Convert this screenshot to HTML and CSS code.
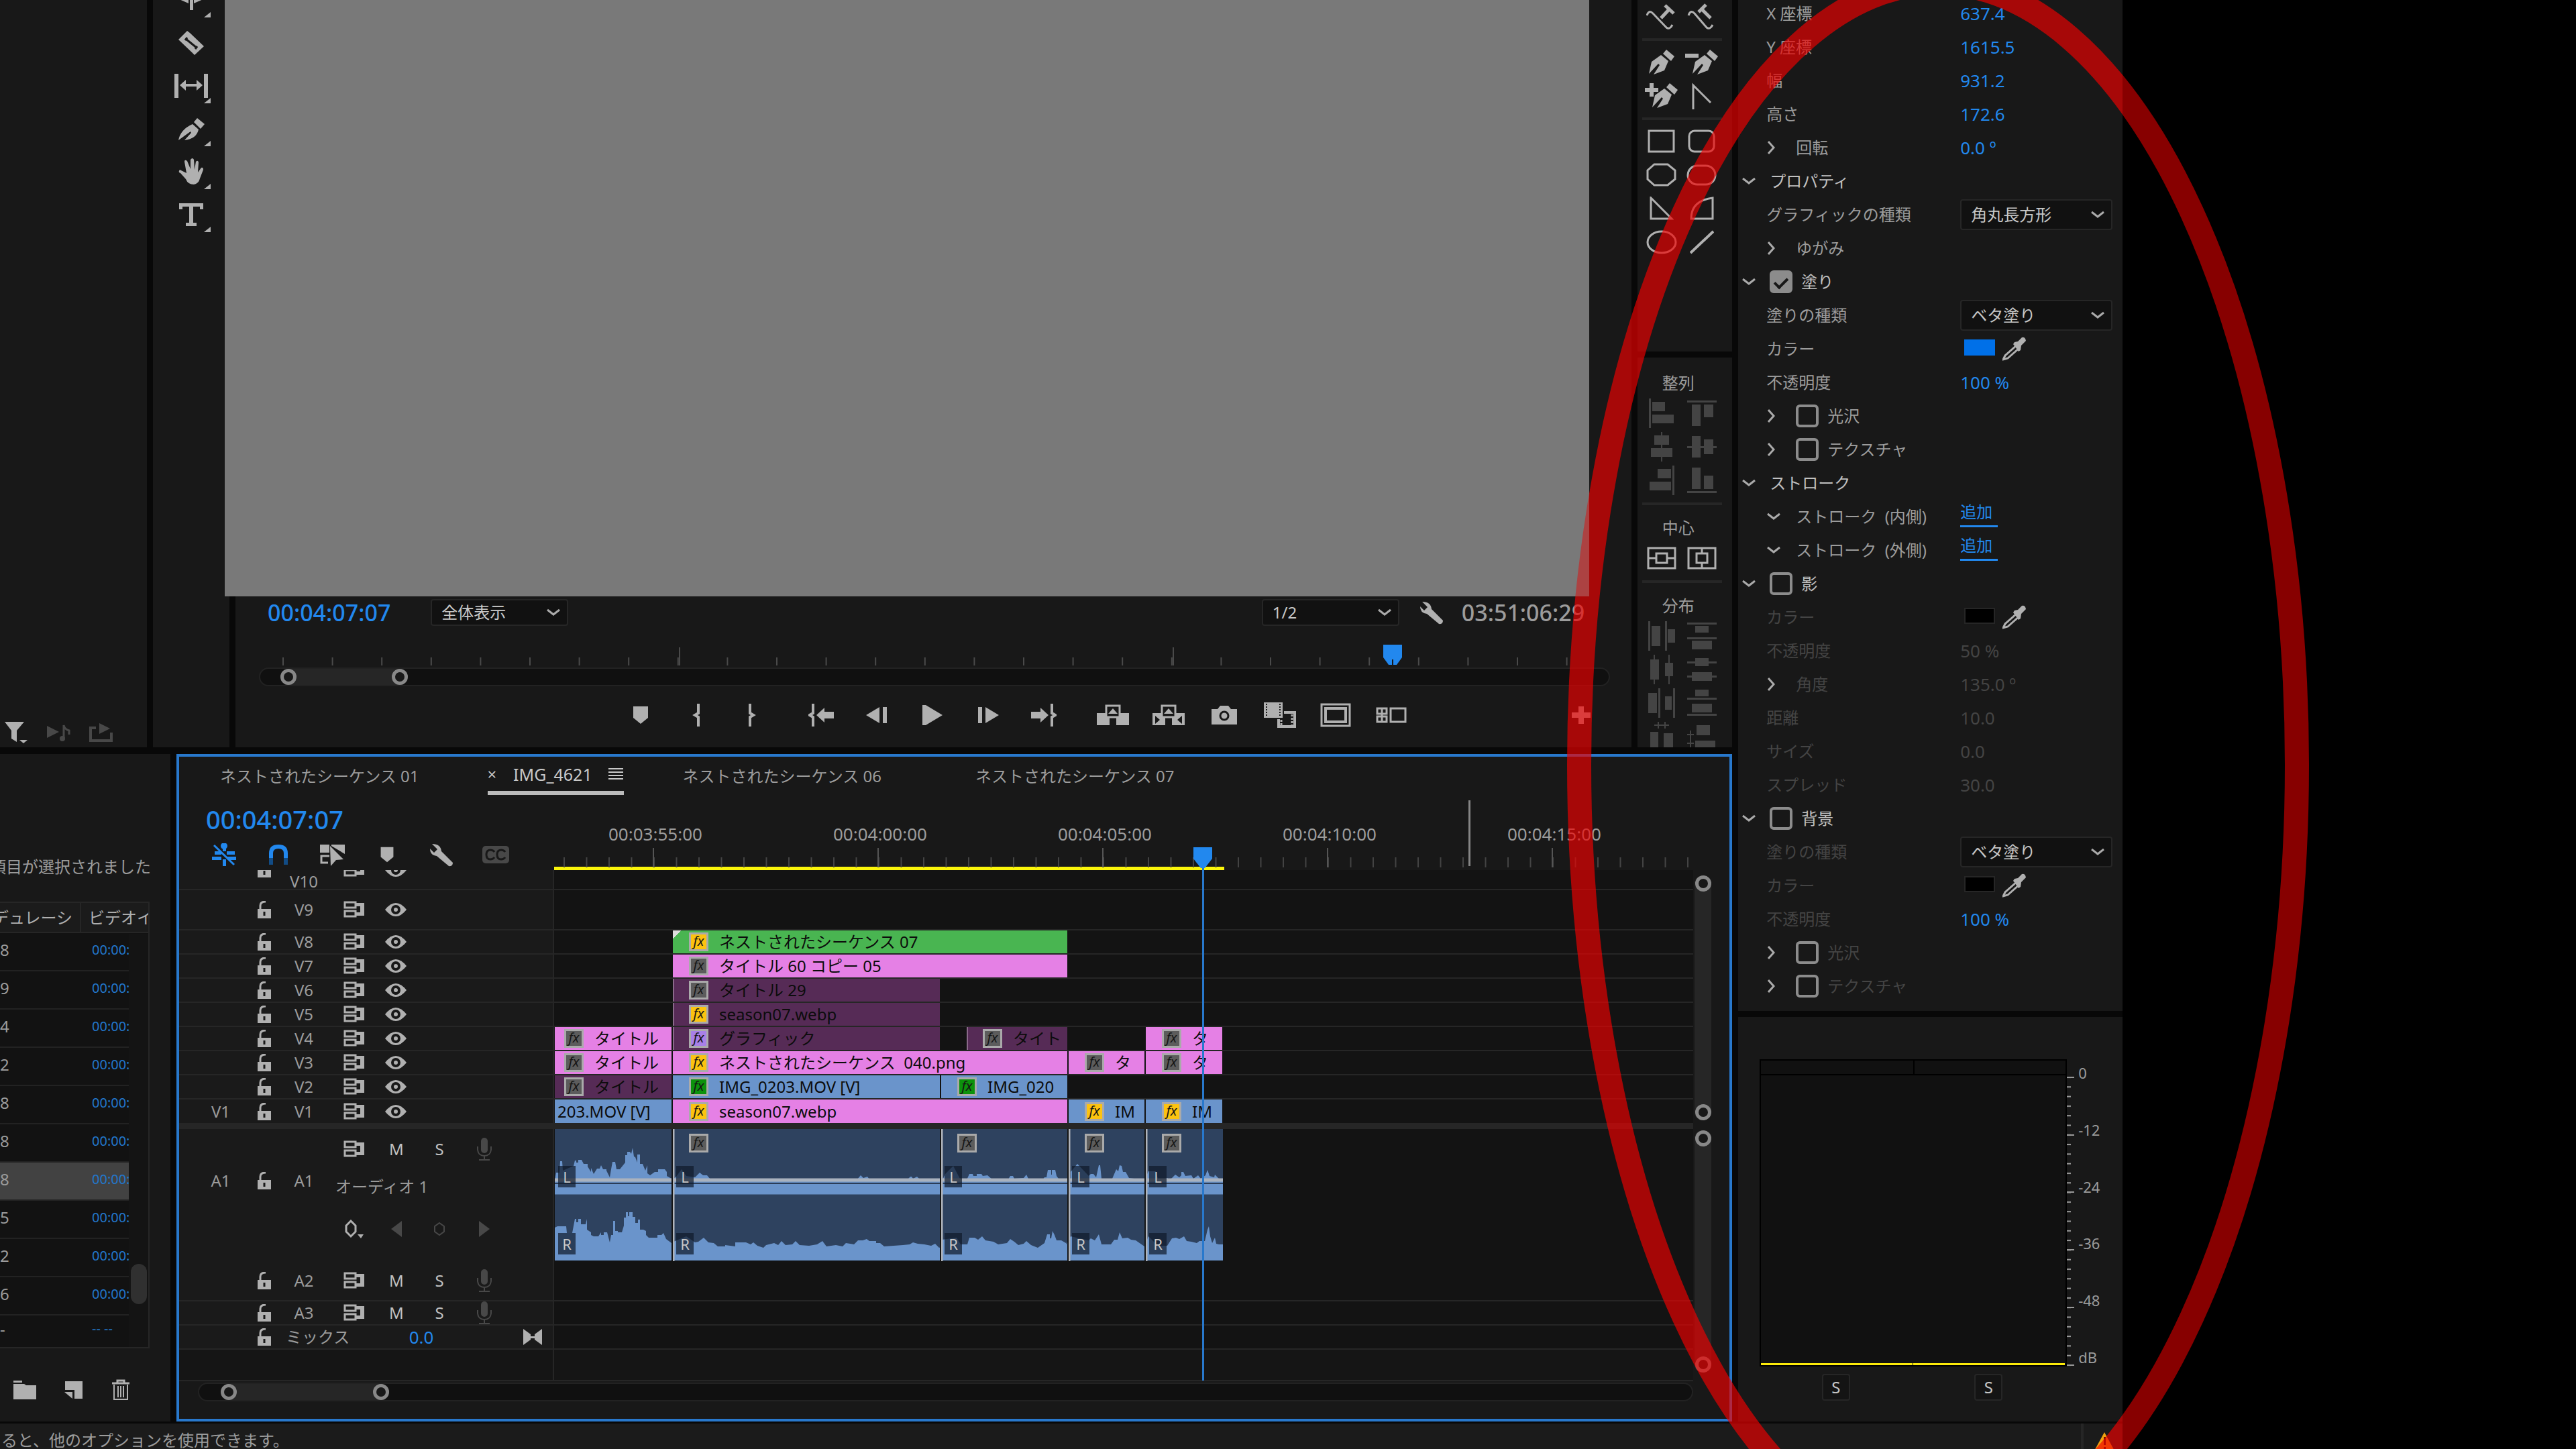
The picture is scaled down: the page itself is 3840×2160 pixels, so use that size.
FILE: index.html
```html
<!DOCTYPE html>
<html lang="ja">
<head>
    <meta charset="UTF-8">
    <meta name="viewport" content="width=device-width, initial-scale=1.0">
    <title>IMG_4621</title>
    <link rel="stylesheet" href="styles.css">
</head>
<body>
    <svg class="sprite" aria-hidden="true">
        <symbol id="i-down" viewBox="0 0 20 12"><path d="M1 2l9 7 9-7" fill="none" stroke="currentColor" stroke-width="3"/></symbol>
        <symbol id="i-right" viewBox="0 0 12 20"><path d="M2 1l8 9-8 9" fill="none" stroke="currentColor" stroke-width="3"/></symbol>
        <symbol id="i-corner" viewBox="0 0 10 8"><path d="M10 0v8H0z" fill="currentColor"/></symbol>
        <symbol id="i-lock" viewBox="0 0 22 26"><path d="M1 12h20v14H1z" fill="currentColor"/><path d="M5 13V7q0-6 8-6" fill="none" stroke="currentColor" stroke-width="3"/><path d="M11 16v6" stroke="#181818" stroke-width="3"/></symbol>
        <symbol id="i-sync" viewBox="0 0 32 26"><path d="M2 2h16v8H2zM2 15h16v8H2z" fill="none" stroke="currentColor" stroke-width="3"/><path d="M18 3h13v19H18v-5h7V8h-7z" fill="currentColor"/></symbol>
        <symbol id="i-eye" viewBox="0 0 32 22"><path d="M0 11Q8 1 16 1t16 10q-8 10-16 10T0 11z" fill="currentColor"/><circle cx="16" cy="11" r="7" fill="#181818"/><circle cx="16" cy="11" r="3" fill="currentColor"/></symbol>
        <symbol id="i-mic" viewBox="0 0 24 34"><rect x="7" y="0" width="10" height="23" rx="5" fill="currentColor"/><path d="M2 13v5q1 9 10 9t10-9v-5M12 27v6M4 33h16" fill="none" stroke="currentColor" stroke-width="2"/></symbol>
        <symbol id="i-pipette" viewBox="0 0 36 36"><path d="M22 12L4 28l-3 6 7-2 18-16" fill="none" stroke="currentColor" stroke-width="3"/><path d="M18 8l5-1 6-6q5-1 6 5l-7 7-1 7-3 2L16 11z" fill="currentColor"/></symbol>
        <symbol id="i-marker" viewBox="0 0 24 28"><path d="M1 1h22v17L12 27 1 18z" fill="currentColor"/></symbol>
        <symbol id="i-wrench" viewBox="0 0 36 36"><path d="M4 2L12 10l-5 5-6-6q0 10 10 11l18 15q6 1 6-5L18 13Q17 2 4 2z" fill="currentColor"/></symbol>
        <symbol id="i-pen" viewBox="0 0 40 38"><path d="M1 36Q4 20 22 12l9 8Q28 34 10 36L20 25l-1-2z" fill="currentColor"/><path d="M24 9l5-6 11 9-6 7z" fill="currentColor"/></symbol>
        <symbol id="i-nib" viewBox="0 0 40 38"><path d="M1 36L5 18 19 8l11 9-6 14-16 6 9-14-2-2z" fill="currentColor"/><path d="M22 6l5-6 12 10-5 7z" fill="currentColor"/></symbol>
    </svg>

    <div class="app">
        <div class="workspace">
            <div class="upper">
                <section class="panel effects">
                    <div class="effects-bar">
                        <button aria-label="フィルター"><svg width="36" height="32" viewBox="0 0 36 32"><path d="M0 0h29L18 13v17l-8-5V13z" fill="currentColor"/><path d="M22 27h12l-6 5z" fill="currentColor"/></svg></button>
                        <button class="dim" aria-label="オーディオ再生"><svg width="36" height="26" viewBox="0 0 36 26"><path d="M0 3l18 9-18 9z" fill="currentColor"/><path d="M25 21V2q1 6 8 8v6" fill="none" stroke="currentColor" stroke-width="3"/><circle cx="23" cy="22" r="4" fill="currentColor"/></svg></button>
                        <button class="dim" aria-label="書き出し"><svg width="36" height="28" viewBox="0 0 36 28"><path d="M10 7H2v19h31V14" fill="none" stroke="currentColor" stroke-width="4"/><path d="M15 0l16 8-16 8z" fill="currentColor"/></svg></button>
                    </div>
                </section>

                <section class="panel tools">
                    <button aria-label="トラック選択ツール"><svg width="40" height="30" viewBox="0 0 40 30"><path d="M18 0h5v30h-5zM0 13l16 7v-7zM40 13l-16 7v-7z" fill="currentColor"/></svg><svg class="corner"><use href="#i-corner"/></svg></button>
                    <button aria-label="レーザーツール"><svg width="40" height="38" viewBox="0 0 40 38"><path d="M1 14L14 1l4 3 21 20-14 13-4-4z" fill="currentColor"/><path d="M12 13l16 13M14 11l-3 4M29 24l-3 4" stroke="#181818" stroke-width="3"/></svg></button>
                    <button aria-label="スリップツール"><svg width="50" height="36" viewBox="0 0 50 36"><path d="M0 0h6v36H0zM44 0h6v36h-6zM8 17l9-8v6h16V9l9 8-9 8v-6H17v6z" fill="currentColor"/></svg><svg class="corner"><use href="#i-corner"/></svg></button>
                    <button aria-label="ペンツール"><svg width="40" height="38"><use href="#i-pen"/></svg><svg class="corner"><use href="#i-corner"/></svg></button>
                    <button aria-label="手のひらツール"><svg width="38" height="40" viewBox="0 0 38 40"><path d="M2 17Q-1 21 3 22l8 9q3 8 12 8 7-1 9-9l5-13q0-4-3-3l-5 7 1-15q-1-4-4-1l-2 12-1-15q-2-4-5 0v14L13 4q-4-3-4 1l3 17z" fill="currentColor"/></svg><svg class="corner"><use href="#i-corner"/></svg></button>
                    <button aria-label="横書き文字ツール"><svg width="36" height="34" viewBox="0 0 36 34"><path d="M0 0h36v9h-5V5H21v24h5v5H10v-5h5V5H5v4H0z" fill="currentColor"/></svg><svg class="corner"><use href="#i-corner"/></svg></button>
                </section>

                <section class="panel monitor">
                    <div class="video"></div>
                    <div class="monitor-info">
                        <button class="timecode">00:04:07:07</button>
                        <div class="select zoom-select">
                            <select aria-label="ズームレベル"><option>全体表示</option></select>
                            <svg><use href="#i-down"/></svg>
                        </div>
                        <div class="select quality-select">
                            <select aria-label="再生時の解像度"><option>1/2</option></select>
                            <svg><use href="#i-down"/></svg>
                        </div>
                        <button class="wrench" aria-label="設定"><svg width="36" height="36"><use href="#i-wrench"/></svg></button>
                        <span class="duration">03:51:06:29</span>
                    </div>
                    <div class="monitor-ruler">
                        <svg width="100%" height="34">
                            <defs>
                                <pattern id="mon-ticks" x="33" width="73.6" height="34" patternUnits="userSpaceOnUse"><path d="M1 21v12" stroke="#4a4a4a" stroke-width="2"/></pattern>
                                <pattern id="mon-major" x="624" width="736" height="34" patternUnits="userSpaceOnUse"><path d="M1 6v27" stroke="#4a4a4a" stroke-width="2"/></pattern>
                            </defs>
                            <rect x="33" width="1930" height="34" fill="url(#mon-ticks)"/>
                            <rect x="33" width="1930" height="34" fill="url(#mon-major)"/>
                            <path d="M1674 2h28v19l-8 11h-5v-8h-2v8h-5l-8-11z" fill="#2288ee"/>
                        </svg>
                    </div>
                    <div class="hscroll monitor-scroll"><div class="thumb"><i></i><i></i></div></div>
                    <div class="transport">
                        <button aria-label="マーカーを追加"><svg width="24" height="28"><use href="#i-marker"/></svg></button>
                        <button aria-label="インをマーク"><svg width="12" height="34" viewBox="0 0 12 34"><path d="M11 1H9v13l-5 3 5 3v13h2" fill="none" stroke="currentColor" stroke-width="4"/></svg></button>
                        <button aria-label="アウトをマーク"><svg width="12" height="34" viewBox="0 0 12 34"><path d="M1 1h2v13l5 3-5 3v13H1" fill="none" stroke="currentColor" stroke-width="4"/></svg></button>
                        <button class="spaced" aria-label="インへ移動"><svg width="38" height="34" viewBox="0 0 38 34"><path d="M9 1H7v13l-5 3 5 3v13h2" fill="none" stroke="currentColor" stroke-width="4"/><path d="M12 17L24 6v6h14v10H24v6z" fill="currentColor"/></svg></button>
                        <button aria-label="1 フレーム前へ"><svg width="32" height="24" viewBox="0 0 32 24"><path d="M0 12L20 0v24zM25 0h6v24h-6z" fill="currentColor"/></svg></button>
                        <button aria-label="再生"><svg width="30" height="30" viewBox="0 0 30 30"><path d="M0 0h5l25 15L5 30H0z" fill="currentColor"/></svg></button>
                        <button aria-label="1 フレーム先へ"><svg width="32" height="24" viewBox="0 0 32 24"><path d="M32 12L12 0v24zM1 0h6v24H1z" fill="currentColor"/></svg></button>
                        <button aria-label="アウトへ移動"><svg width="38" height="34" viewBox="0 0 38 34"><path d="M29 1h2v13l5 3-5 3v13h-2" fill="none" stroke="currentColor" stroke-width="4"/><path d="M26 17L14 6v6H0v10h14v6z" fill="currentColor"/></svg></button>
                        <button class="spaced" aria-label="リフト"><svg width="48" height="32" viewBox="0 0 48 32"><path d="M0 13h13v6h6v12H0zM48 13H35v6h-6v12h19z" fill="currentColor"/><path d="M14 19V2h20v17z" fill="none" stroke="currentColor" stroke-width="3"/><path d="M24 6l7 8H17z" fill="currentColor"/></svg></button>
                        <button aria-label="抽出"><svg width="48" height="32" viewBox="0 0 48 32"><path d="M0 13h13v6h6v12H0zM48 13H35v6h-6v12h19z" fill="currentColor"/><path d="M14 19V2h20v17z" fill="none" stroke="currentColor" stroke-width="3"/><path d="M24 6l7 8H17z" fill="currentColor"/><path d="M4 17l7 6-7 6zM44 17l-7 6 7 6z" fill="#181818"/></svg></button>
                        <button aria-label="フレームを書き出し"><svg width="38" height="28" viewBox="0 0 38 28"><path d="M0 5h9l4-5h12l4 5h9v23H0z" fill="currentColor"/><circle cx="19" cy="15" r="6" fill="none" stroke="#181818" stroke-width="3"/></svg></button>
                        <button aria-label="比較表示"><svg width="48" height="38" viewBox="0 0 48 38"><path d="M0 0h28v23H0z" fill="currentColor"/><path d="M4 2v20M24 2v20" stroke="#181818" stroke-width="2" stroke-dasharray="2 2"/><path d="M30 15h16v21H22V25" fill="none" stroke="currentColor" stroke-width="4"/><path d="M26 26v9M42 18v18" stroke="currentColor" stroke-width="3" stroke-dasharray="3 2"/></svg></button>
                        <button aria-label="セーフマージン"><svg width="46" height="36" viewBox="0 0 46 36"><path d="M2 2h42v32H2z" fill="none" stroke="currentColor" stroke-width="3"/><path d="M8 8h30v20H8z" fill="none" stroke="currentColor" stroke-width="4"/></svg></button>
                        <button aria-label="マルチカメラ表示"><svg width="46" height="24" viewBox="0 0 46 24"><path d="M2 2h14v8H2zM2 14h14v8H2zM22 2h22v20H22z" fill="none" stroke="currentColor" stroke-width="3"/><path d="M9 2v20" stroke="currentColor" stroke-width="3"/></svg></button>
                        <button class="plus" aria-label="ボタンエディター"><svg width="28" height="26" viewBox="0 0 28 26"><path d="M10 0h8v9h10v8H18v9h-8v-9H0V9h10z" fill="currentColor"/></svg></button>
                    </div>
                </section>

                <div class="title-side">
                    <section class="panel title-tools">
                        <div class="pair">
                            <button aria-label="パス上文字"><svg width="46" height="40" viewBox="0 0 46 40"><path d="M1 18q3-9 9-3l20 21q5 4 9-4" fill="none" stroke="currentColor" stroke-width="3"/><path d="M22 22L36 7M28 3l13 12" stroke="currentColor" stroke-width="5"/></svg></button>
                            <button aria-label="縦書きパス上文字"><svg width="46" height="40" viewBox="0 0 46 40"><path d="M3 18q3-9 9-3l18 21q5 4 9-4" fill="none" stroke="currentColor" stroke-width="3"/><path d="M36 22L22 8M18 13L29 2" stroke="currentColor" stroke-width="5"/></svg></button>
                        </div>
                        <hr>
                        <div class="pair">
                            <button aria-label="ペン"><svg width="40" height="38"><use href="#i-nib"/></svg></button>
                            <button aria-label="アンカーポイントの削除"><svg width="50" height="38" viewBox="0 0 50 38"><path d="M0 6h20v6H0z" fill="currentColor"/><use href="#i-nib" x="10" width="40" height="38"/></svg></button>
                        </div>
                        <div class="pair">
                            <button aria-label="アンカーポイントの追加"><svg width="50" height="38" viewBox="0 0 50 38"><path d="M7 0h6v7h7v6h-7v7H7v-7H0V7h7z" fill="currentColor"/><use href="#i-nib" x="10" width="40" height="38"/></svg></button>
                            <button aria-label="アンカーポイントの切り替え"><svg width="30" height="40" viewBox="0 0 30 40"><path d="M2 40V4l26 26" fill="none" stroke="currentColor" stroke-width="3"/></svg></button>
                        </div>
                        <hr>
                        <div class="pair">
                            <button aria-label="長方形"><svg width="42" height="36" viewBox="0 0 42 36"><rect x="2" y="2" width="37" height="31" fill="none" stroke="currentColor" stroke-width="3"/></svg></button>
                            <button aria-label="角丸長方形"><svg width="42" height="36" viewBox="0 0 42 36"><rect x="2" y="2" width="37" height="31" rx="8" fill="none" stroke="currentColor" stroke-width="3"/></svg></button>
                        </div>
                        <div class="pair">
                            <button aria-label="面取り長方形"><svg width="46" height="36" viewBox="0 0 46 36"><path d="M12 2h20l11 9v13l-11 9H12L2 24V11z" fill="none" stroke="currentColor" stroke-width="3"/></svg></button>
                            <button aria-label="角丸四角形"><svg width="46" height="36" viewBox="0 0 46 36"><rect x="2" y="4" width="41" height="28" rx="14" fill="none" stroke="currentColor" stroke-width="3"/></svg></button>
                        </div>
                        <div class="pair">
                            <button aria-label="くさび形"><svg width="36" height="36" viewBox="0 0 36 36"><path d="M2 2v31h31z" fill="none" stroke="currentColor" stroke-width="3"/></svg></button>
                            <button aria-label="円弧"><svg width="36" height="36" viewBox="0 0 36 36"><path d="M34 2v31H2Q2 6 34 2z" fill="none" stroke="currentColor" stroke-width="3"/></svg></button>
                        </div>
                        <div class="pair">
                            <button aria-label="楕円"><svg width="46" height="36" viewBox="0 0 46 36"><ellipse cx="23" cy="18" rx="21" ry="16" fill="none" stroke="currentColor" stroke-width="3"/></svg></button>
                            <button aria-label="ライン"><svg width="36" height="36" viewBox="0 0 36 36"><path d="M1 34L35 2" stroke="currentColor" stroke-width="4"/></svg></button>
                        </div>
                    </section>

                    <section class="panel align">
                        <h3>整列</h3>
                        <div class="pair dim">
                            <button disabled aria-label="左揃え"><svg width="38" height="44" viewBox="0 0 38 44"><path d="M0 0h3v44H0zM5 5h19v14H5zM5 24h32v13H5z" fill="currentColor"/></svg></button>
                            <button disabled aria-label="上揃え"><svg width="44" height="38" viewBox="0 0 44 38"><path d="M0 0h44v3H0zM7 6h13v32H7zM25 6h14v19H25z" fill="currentColor"/></svg></button>
                        </div>
                        <div class="pair dim">
                            <button disabled aria-label="水平方向中央揃え"><svg width="34" height="44" viewBox="0 0 34 44"><path d="M16 0h2v44h-2zM6 5h22v14H6zM1 24h32v13H1z" fill="currentColor"/></svg></button>
                            <button disabled aria-label="垂直方向中央揃え"><svg width="44" height="34" viewBox="0 0 44 34"><path d="M0 16h44v3H0zM7 1h13v32H7zM25 6h14v22H25z" fill="currentColor"/></svg></button>
                        </div>
                        <div class="pair dim">
                            <button disabled aria-label="右揃え"><svg width="38" height="44" viewBox="0 0 38 44"><path d="M35 0h3v44h-3zM13 5h20v14H13zM1 24h32v13H1z" fill="currentColor"/></svg></button>
                            <button disabled aria-label="下揃え"><svg width="44" height="38" viewBox="0 0 44 38"><path d="M0 35h44v3H0zM7 0h13v32H7zM25 12h14v20H25z" fill="currentColor"/></svg></button>
                        </div>
                        <hr>
                        <h3>中心</h3>
                        <div class="pair">
                            <button aria-label="垂直方向中央"><svg width="44" height="34" viewBox="0 0 44 34"><path d="M2 2h40v30H2zM14 10h16v14H14zM2 17h12M30 17h12" fill="none" stroke="currentColor" stroke-width="3"/></svg></button>
                            <button aria-label="水平方向中央"><svg width="44" height="34" viewBox="0 0 44 34"><path d="M2 2h40v30H2zM14 10h16v14H14zM22 2v8M22 24v8" fill="none" stroke="currentColor" stroke-width="3"/></svg></button>
                        </div>
                        <hr>
                        <h3>分布</h3>
                        <div class="pair dim">
                            <button disabled aria-label="左端分布"><svg width="40" height="44" viewBox="0 0 40 44"><path d="M0 0h3v44H0zM5 7h13v30H5zM25 0h3v44h-3zM29 12h11v20H29z" fill="currentColor"/></svg></button>
                            <button disabled aria-label="上端分布"><svg width="44" height="40" viewBox="0 0 44 40"><path d="M0 0h44v3H0zM12 5h20v10H12zM0 22h44v3H0zM7 27h30v13H7z" fill="currentColor"/></svg></button>
                        </div>
                        <div class="pair dim">
                            <button disabled aria-label="水平方向中央分布"><svg width="38" height="44" viewBox="0 0 38 44"><path d="M7 0h2v44H7zM2 7h13v30H2zM29 0h2v44h-2zM24 12h12v20H24z" fill="currentColor"/></svg></button>
                            <button disabled aria-label="垂直方向中央分布"><svg width="44" height="38" viewBox="0 0 44 38"><path d="M0 7h44v3H0zM12 2h20v12H12zM0 28h44v3H0zM7 23h30v13H7z" fill="currentColor"/></svg></button>
                        </div>
                        <div class="pair dim">
                            <button disabled aria-label="右端分布"><svg width="40" height="44" viewBox="0 0 40 44"><path d="M15 0h3v44h-3zM0 7h13v30H0zM37 0h3v44h-3zM25 12h10v20H25z" fill="currentColor"/></svg></button>
                            <button disabled aria-label="下端分布"><svg width="44" height="40" viewBox="0 0 44 40"><path d="M0 12h44v3H0zM12 0h20v10H12zM0 36h44v3H0zM7 21h30v13H7z" fill="currentColor"/></svg></button>
                        </div>
                        <div class="pair dim">
                            <button disabled aria-label="水平方向等間隔"><svg width="36" height="44" viewBox="0 0 36 44"><path d="M1 15h12v29H1zM21 17h14v27H21zM7 4h22v2H7zM12 0h2v10h-2zM22 0h2v10h-2z" fill="currentColor"/></svg></button>
                            <button disabled aria-label="垂直方向等間隔"><svg width="44" height="44" viewBox="0 0 44 44"><path d="M14 5h20v15H14zM12 28h30v14H12zM4 13h2v27H4zM0 18h10v2H0zM0 31h10v2H0z" fill="currentColor"/></svg></button>
                        </div>
                    </section>
                </div>
            </div>

            <div class="lower">
                <section class="panel project">
                    <div class="project-status"><span>項目が選択されました</span></div>
                    <div class="bin">
                        <table>
                            <thead><tr><th>デュレーシ</th><th>ビデオイ</th></tr></thead>
                            <tbody>
                                <tr><td>8</td><td>00:00:</td></tr>
                                <tr><td>9</td><td>00:00:</td></tr>
                                <tr><td>4</td><td>00:00:</td></tr>
                                <tr><td>2</td><td>00:00:</td></tr>
                                <tr><td>8</td><td>00:00:</td></tr>
                                <tr><td>8</td><td>00:00:</td></tr>
                                <tr class="selected"><td>8</td><td>00:00:</td></tr>
                                <tr><td>5</td><td>00:00:</td></tr>
                                <tr><td>2</td><td>00:00:</td></tr>
                                <tr><td>6</td><td>00:00:</td></tr>
                                <tr class="last"><td>-</td><td>-- --</td></tr>
                            </tbody>
                        </table>
                        <div class="bin-scroll"></div>
                    </div>
                    <div class="project-bar">
                        <button aria-label="新規ビン"><svg width="34" height="28" viewBox="0 0 34 28"><path d="M0 0h13v3H0zM0 5h16l3 2h15v21H0z" fill="currentColor"/></svg></button>
                        <button aria-label="新規項目"><svg width="28" height="28" viewBox="0 0 28 28"><path d="M1 1h26v26H15V14H1z" fill="currentColor"/><path d="M0 17h12v10z" fill="currentColor"/></svg></button>
                        <button aria-label="消去"><svg width="28" height="32" viewBox="0 0 28 32"><path d="M1 6h26M9 5V2h10v3" fill="none" stroke="currentColor" stroke-width="3"/><path d="M4 8v22h20V8M10 10v17M14 10v17M18 10v17" fill="none" stroke="currentColor" stroke-width="2"/></svg></button>
                    </div>
                </section>

                <section class="timeline">
                    <div class="tabs">
                        <button class="tab">ネストされたシーケンス 01</button>
                        <div class="tab active"><button aria-label="閉じる">×</button><button class="tab-name">IMG_4621</button><button aria-label="パネルメニュー"><svg width="22" height="20" viewBox="0 0 22 20"><path d="M0 2h22M0 7h22M0 12h22M0 17h22" stroke="currentColor" stroke-width="2"/></svg></button></div>
                        <button class="tab">ネストされたシーケンス 06</button>
                        <button class="tab">ネストされたシーケンス 07</button>
                    </div>
                    <div class="tl-top">
                        <div class="tl-controls">
                            <button class="timecode">00:04:07:07</button>
                            <div class="tl-icons">
                                <button class="on" aria-label="ネストとして挿入"><svg width="36" height="34" viewBox="0 0 36 34"><path d="M16 0h5v12h-5zM22 12h12v5H22zM0 20h14v5H0zM4 12h10v5H4zM16 24h5v10h-5zM23 20h13v5H23z" fill="currentColor"/><path d="M3 3l30 29" stroke="currentColor" stroke-width="3"/><circle cx="18" cy="4" r="5" fill="currentColor"/></svg></button>
                                <button class="on" aria-label="スナップ"><svg width="30" height="30" viewBox="0 0 30 30"><path d="M4 20v-7q0-10 11-10t11 10v7" fill="none" stroke="currentColor" stroke-width="6"/><path d="M4 20v10M26 20v10" stroke="#124c85" stroke-width="6"/></svg></button>
                                <button aria-label="リンクされた選択"><svg width="38" height="34" viewBox="0 0 38 34"><path d="M0 2h14v12H0zM17 2h20v14L17 4z" fill="currentColor"/><path d="M14 19H2v10h10" fill="none" stroke="currentColor" stroke-width="3"/><path d="M15 4l20 20-11 1-8 9z" fill="currentColor"/></svg></button>
                                <button aria-label="マーカー"><svg width="22" height="24"><use href="#i-marker"/></svg></button>
                                <button aria-label="タイムライン表示設定"><svg width="36" height="36"><use href="#i-wrench"/></svg></button>
                                <button class="dim" aria-label="キャプション"><svg width="40" height="26" viewBox="0 0 40 26"><rect width="40" height="26" rx="5" fill="currentColor"/><path d="M18 9q-2-3-6-3-6 0-6 7t6 7q4 0 6-3M34 9q-2-3-6-3-6 0-6 7t6 7q4 0 6-3" fill="none" stroke="#181818" stroke-width="3"/></svg></button>
                            </div>
                        </div>
                        <div class="ruler">
                            <div class="ruler-labels"><span>00:03:55:00</span><span>00:04:00:00</span><span>00:04:05:00</span><span>00:04:10:00</span><span>00:04:15:00</span></div>
                            <svg width="100%" height="29">
                                <defs>
                                    <pattern id="tl-ticks" x="14" width="33.5" height="29" patternUnits="userSpaceOnUse"><path d="M1 14v15" stroke="#444" stroke-width="2"/></pattern>
                                    <pattern id="tl-major" x="147" width="335" height="29" patternUnits="userSpaceOnUse"><path d="M1 0v29" stroke="#555" stroke-width="2"/></pattern>
                                </defs>
                                <rect x="14" width="1680" height="29" fill="url(#tl-ticks)"/>
                                <rect x="14" width="1680" height="29" fill="url(#tl-major)"/>
                            </svg>
                            <div class="render-bar"></div>
                            <div class="ghost-line"></div>
                        </div>
                    </div>

                    <div class="tl-body">
                        <div class="tracks">
                            <div class="track v10"><div class="head"><span></span><svg class="lock"><use href="#i-lock"/></svg><button>V10</button><svg class="sync"><use href="#i-sync"/></svg><svg class="eye"><use href="#i-eye"/></svg></div><div class="lane"></div></div>
                            <div class="track v9"><div class="head"><span></span><svg class="lock"><use href="#i-lock"/></svg><button>V9</button><svg class="sync"><use href="#i-sync"/></svg><svg class="eye"><use href="#i-eye"/></svg></div><div class="lane"></div></div>
                            <div class="track"><div class="head"><span></span><svg class="lock"><use href="#i-lock"/></svg><button>V8</button><svg class="sync"><use href="#i-sync"/></svg><svg class="eye"><use href="#i-eye"/></svg></div>
                                <div class="lane"><div class="clip green long nest"><b class="fx yellow">fx</b>ネストされたシーケンス 07</div></div></div>
                            <div class="track"><div class="head"><span></span><svg class="lock"><use href="#i-lock"/></svg><button>V7</button><svg class="sync"><use href="#i-sync"/></svg><svg class="eye"><use href="#i-eye"/></svg></div>
                                <div class="lane"><div class="clip pink long"><b class="fx">fx</b>タイトル 60 コピー 05</div></div></div>
                            <div class="track"><div class="head"><span></span><svg class="lock"><use href="#i-lock"/></svg><button>V6</button><svg class="sync"><use href="#i-sync"/></svg><svg class="eye"><use href="#i-eye"/></svg></div>
                                <div class="lane"><div class="clip off c2"><b class="fx">fx</b>タイトル 29</div></div></div>
                            <div class="track"><div class="head"><span></span><svg class="lock"><use href="#i-lock"/></svg><button>V5</button><svg class="sync"><use href="#i-sync"/></svg><svg class="eye"><use href="#i-eye"/></svg></div>
                                <div class="lane"><div class="clip off c2"><b class="fx yellow">fx</b>season07.webp</div></div></div>
                            <div class="track"><div class="head"><span></span><svg class="lock"><use href="#i-lock"/></svg><button>V4</button><svg class="sync"><use href="#i-sync"/></svg><svg class="eye"><use href="#i-eye"/></svg></div>
                                <div class="lane"><div class="clip pink c1"><b class="fx">fx</b>タイトル</div><div class="clip off c2"><b class="fx violet">fx</b>グラフィック</div><div class="clip off c3 late"><b class="fx">fx</b>タイト</div><div class="clip pink c5"><b class="fx">fx</b>タ</div></div></div>
                            <div class="track"><div class="head"><span></span><svg class="lock"><use href="#i-lock"/></svg><button>V3</button><svg class="sync"><use href="#i-sync"/></svg><svg class="eye"><use href="#i-eye"/></svg></div>
                                <div class="lane"><div class="clip pink c1"><b class="fx">fx</b>タイトル</div><div class="clip pink long"><b class="fx yellow">fx</b>ネストされたシーケンス&nbsp; 040.png</div><div class="clip pink c4"><b class="fx">fx</b>タ</div><div class="clip pink c5"><b class="fx">fx</b>タ</div></div></div>
                            <div class="track"><div class="head"><span></span><svg class="lock"><use href="#i-lock"/></svg><button>V2</button><svg class="sync"><use href="#i-sync"/></svg><svg class="eye"><use href="#i-eye"/></svg></div>
                                <div class="lane"><div class="clip off c1"><b class="fx">fx</b>タイトル</div><div class="clip blue c2"><b class="fx leaf">fx</b>IMG_0203.MOV [V]</div><div class="clip blue c3"><b class="fx leaf">fx</b>IMG_020</div></div></div>
                            <div class="track v1"><div class="head"><button>V1</button><svg class="lock"><use href="#i-lock"/></svg><button>V1</button><svg class="sync"><use href="#i-sync"/></svg><svg class="eye"><use href="#i-eye"/></svg></div>
                                <div class="lane"><div class="clip blue c1 tail">203.MOV [V]</div><div class="clip pink long"><b class="fx yellow">fx</b>season07.webp</div><div class="clip blue c4"><b class="fx yellow">fx</b>IM</div><div class="clip blue c5"><b class="fx yellow">fx</b>IM</div></div></div>
                            <div class="av-split"></div>
                            <div class="track a1">
                                <div class="head">
                                    <button>A1</button><svg class="lock"><use href="#i-lock"/></svg><button>A1</button>
                                    <div class="a1-controls">
                                        <div class="a-row"><svg class="sync"><use href="#i-sync"/></svg><button>M</button><button>S</button><svg class="mic"><use href="#i-mic"/></svg></div>
                                        <div class="a-name">オーディオ 1</div>
                                        <div class="a-row keys"><svg width="30" height="28" viewBox="0 0 30 28"><path d="M10 2l7 7v9l-7 7-7-7V9z" fill="none" stroke="currentColor" stroke-width="3"/><path d="M20 22h9l-4 6z" fill="currentColor"/></svg><svg class="dim" width="16" height="24" viewBox="0 0 16 24"><path d="M16 0v24L0 12z" fill="currentColor"/></svg><svg class="dim" width="18" height="22" viewBox="0 0 18 22"><path d="M9 2l7 5v8l-7 5-7-5V7z" fill="none" stroke="currentColor" stroke-width="2"/></svg><svg class="dim" width="16" height="24" viewBox="0 0 16 24"><path d="M0 0v24l16-12z" fill="currentColor"/></svg></div>
                                    </div>
                                </div>
                                <div class="lane audio">
                                    <!-- left and right channel waveforms -->
                                    <svg class="wave" width="998" height="197" viewBox="0 0 998 197">
                                        <path fill="#2e425f" d="M1 0h996v196H1z"/>
                                        <g fill="#6a94cb">
                                            <path d="M1 98V77L3 65H8L9 48H12L13 62 29 55 31 47H33V50H36V46H41L44 52H50V56L55 64V58L59 67 64 59H68L70 54 73 60H78V62L83 72 85 60 87 49H91L93 60H98L102 55 106 50V39H109V34H113L115 37 117 28 119 41 121 42 124 50V38H128V52H132L136 62 139 54V66L143 69 150 64H155V60H165L168 64V70L175 74H178L182 71 190 60 197 70 210 72 217 65 222 69H228L233 75H275L280 74H294L300 77H325L330 74H345L355 75H375L380 76H395L400 74 404 77H440L452 75 457 69 461 73 467 71 470 75H482L495 76H512L517 74H528L531 71H533L535 74 541 71 545 75H570L576 76H579L583 67 595 55 606 76H615L619 67H624L625 70H630V67H637L639 70 646 69 653 75H677L680 70H684L686 74 700 73 704 68 707 74 711 76H728L731 72H734L736 61H741V68H742V61H747L749 70 752 74H763L770 76V64L780 52 797 70 800 67H804L808 72 812 54H814L816 74H832L838 60 841 63 843 54 846 55 848 64H852L857 73 880 76 886 63 897 63 900 74H910L914 73 918 76 926 68 932 72 935 69V64H938L941 70 950 69 953 74 960 69 964 74 971 69 974 61 977 70 984 72 985 68 991 74H997V98z"/>
                                            <path d="M1 196V147L5 145H18L19 155H27L31 134H33V139H36V134H40V142H47L49 134V150L55 154V158L59 160H66L70 154V158H74V154H79L83 169 85 158H88V137H91V152H95V154H101L104 144V132H107V124H110V130H112V124H117V131H121V140H125V135H128V150H133L137 152V158L141 162H154V158H160L163 155 167 164 175 170 178 174V168L197 160 210 169 215 168 223 162 230 169 238 170 244 175H255V173L270 175V169H280L286 169 293 172 297 169 303 174 312 177 316 173 328 170 334 173 339 167 345 173 355 172 360 167 366 173 380 174 392 172 400 167 406 175 420 173 430 175 435 170 447 172 453 166H460L466 164 470 167H480V170H486L492 175 520 173 530 172 535 169 542 171 552 172 562 174 568 171 574 177 578 175V165L600 162 606 172H616L619 162H627L632 165 638 160 643 166 655 168 662 172 675 170 680 164 686 168 692 173 700 171 704 167 711 173 721 177 731 170 735 157H739V163H741L743 152 746 158 749 166H756L763 170V172L770 160 797 166 800 163 806 166 810 160 812 157 816 172 830 172 835 165 840 165 843 154 847 163 855 162 860 165 867 166 880 175 886 160 900 174 914 174 921 163 927 162 932 164 939 160 943 167 950 168 958 170 962 167H970L974 150 976 145 978 160 981 170 985 162 987 171 991 172H997V196z"/>
                                        </g>
                                        <path d="M1 76h996" stroke="#aab2be" stroke-width="5"/>
                                        <path d="M1 81h996" stroke="#2c3d57" stroke-width="2"/>
                                        <path d="M1 98h996" stroke="#2e425f" stroke-width="1"/>
                                        <path d="M178 0v197M578 0v197M768 0v197M883 0v197" stroke="#b0b4bb" stroke-width="3"/>
                                        <path d="M176 0v197M576 0v197M766 0v197M881 0v197" stroke="#151515" stroke-width="2"/>
                                    </svg>
                                    <div class="part c1"><span>L</span><span>R</span></div>
                                    <div class="part c2"><b class="fx">fx</b><span>L</span><span>R</span></div>
                                    <div class="part c3"><b class="fx">fx</b><span>L</span><span>R</span></div>
                                    <div class="part c4"><b class="fx">fx</b><span>L</span><span>R</span></div>
                                    <div class="part c5"><b class="fx">fx</b><span>L</span><span>R</span></div>
                                </div>
                            </div>
                            <div class="track a2"><div class="head"><span></span><svg class="lock"><use href="#i-lock"/></svg><button>A2</button><div class="a-row"><svg class="sync"><use href="#i-sync"/></svg><button>M</button><button>S</button><svg class="mic"><use href="#i-mic"/></svg></div></div><div class="lane"></div></div>
                            <div class="track a3"><div class="head"><span></span><svg class="lock"><use href="#i-lock"/></svg><button>A3</button><div class="a-row"><svg class="sync"><use href="#i-sync"/></svg><button>M</button><button>S</button><svg class="mic"><use href="#i-mic"/></svg></div></div><div class="lane"></div></div>
                            <div class="track mix"><div class="head"><span></span><svg class="lock"><use href="#i-lock"/></svg><span class="mix-name">ミックス</span><button class="hot">0.0</button><svg class="bowtie" width="28" height="24" viewBox="0 0 28 24"><path d="M0 0l11 8v8L0 24zM28 0L17 8v8l11 8zM11 11h6v3h-6z" fill="currentColor"/></svg></div><div class="lane"></div></div>
                            <div class="track rest"><div class="head"></div><div class="lane"></div></div>
                            <div class="playhead"><svg width="28" height="32" viewBox="0 0 28 32"><path d="M0 0h28v17L17 31h-6L0 17z" fill="#2288ee"/></svg></div>
                        </div>
                        <div class="vscrolls">
                            <div class="vscroll video-scroll"><i></i><i></i></div>
                            <div class="vscroll audio-scroll"><i></i><i></i></div>
                        </div>
                    </div>
                    <div class="hscroll tl-scroll"><div class="thumb"><i></i><i></i></div></div>
                </section>
            </div>
        </div>

        <div class="inspector">
            <section class="panel props">
                <div class="row"><span class="name">X 座標</span><button class="hot">637.4</button></div>
                <div class="row"><span class="name">Y 座標</span><button class="hot">1615.5</button></div>
                <div class="row"><span class="name">幅</span><button class="hot">931.2</button></div>
                <div class="row"><span class="name">高さ</span><button class="hot">172.6</button></div>
                <div class="row sub"><svg class="right"><use href="#i-right"/></svg><span class="name">回転</span><button class="hot">0.0 º</button></div>
                <div class="row section"><svg class="down"><use href="#i-down"/></svg><span class="name">プロパティ</span></div>
                <div class="row"><label class="name" for="shape">グラフィックの種類</label><div class="select"><select id="shape"><option>角丸長方形</option></select><svg><use href="#i-down"/></svg></div></div>
                <div class="row sub"><svg class="right"><use href="#i-right"/></svg><span class="name">ゆがみ</span></div>
                <div class="row section"><svg class="down"><use href="#i-down"/></svg><label class="name"><input type="checkbox" checked>塗り</label></div>
                <div class="row"><label class="name" for="fill">塗りの種類</label><div class="select"><select id="fill"><option>ベタ塗り</option></select><svg><use href="#i-down"/></svg></div></div>
                <div class="row"><span class="name">カラー</span><button class="swatch fill-blue" aria-label="カラー"></button><svg class="pipette"><use href="#i-pipette"/></svg></div>
                <div class="row"><span class="name">不透明度</span><button class="hot">100 %</button></div>
                <div class="row sub"><svg class="right"><use href="#i-right"/></svg><label class="name"><input type="checkbox">光沢</label></div>
                <div class="row sub"><svg class="right"><use href="#i-right"/></svg><label class="name"><input type="checkbox">テクスチャ</label></div>
                <div class="row section"><svg class="down"><use href="#i-down"/></svg><span class="name">ストローク</span></div>
                <div class="row sub"><svg class="down"><use href="#i-down"/></svg><span class="name">ストローク&nbsp; (内側)</span><a class="add" href="#">追加</a></div>
                <div class="row sub"><svg class="down"><use href="#i-down"/></svg><span class="name">ストローク&nbsp; (外側)</span><a class="add" href="#">追加</a></div>
                <div class="row section"><svg class="down"><use href="#i-down"/></svg><label class="name"><input type="checkbox">影</label></div>
                <div class="row muted"><span class="name">カラー</span><button class="swatch" aria-label="影のカラー"></button><svg class="pipette"><use href="#i-pipette"/></svg></div>
                <div class="row muted"><span class="name">不透明度</span><button class="hot" disabled>50 %</button></div>
                <div class="row sub muted"><svg class="right"><use href="#i-right"/></svg><span class="name">角度</span><button class="hot" disabled>135.0 º</button></div>
                <div class="row muted"><span class="name">距離</span><button class="hot" disabled>10.0</button></div>
                <div class="row muted"><span class="name">サイズ</span><button class="hot" disabled>0.0</button></div>
                <div class="row muted"><span class="name">スプレッド</span><button class="hot" disabled>30.0</button></div>
                <div class="row section"><svg class="down"><use href="#i-down"/></svg><label class="name"><input type="checkbox">背景</label></div>
                <div class="row muted"><label class="name" for="bgfill">塗りの種類</label><div class="select"><select id="bgfill"><option>ベタ塗り</option></select><svg><use href="#i-down"/></svg></div></div>
                <div class="row muted"><span class="name">カラー</span><button class="swatch" aria-label="背景のカラー"></button><svg class="pipette"><use href="#i-pipette"/></svg></div>
                <div class="row muted"><span class="name">不透明度</span><button class="hot">100 %</button></div>
                <div class="row sub muted"><svg class="right"><use href="#i-right"/></svg><label class="name"><input type="checkbox">光沢</label></div>
                <div class="row sub muted"><svg class="right"><use href="#i-right"/></svg><label class="name"><input type="checkbox">テクスチャ</label></div>
            </section>

            <section class="panel meters">
                <div class="meter-box">
                    <div class="channel"><div class="peak"></div><div class="level"></div></div>
                    <div class="channel"><div class="peak"></div><div class="level"></div></div>
                </div>
                <svg class="meter-scale" width="12" height="460">
                    <defs><pattern id="db" y="26" width="6" height="14.3" patternUnits="userSpaceOnUse"><path d="M0 1h6" stroke="#999" stroke-width="2"/></pattern></defs>
                    <rect y="26" width="6" height="432" fill="url(#db)"/>
                    <path d="M0 27h11M0 113h11M0 198h11M0 284h11M0 370h11M0 456h11" stroke="#999" stroke-width="2"/>
                </svg>
                <div class="meter-labels"><span>0</span><span>-12</span><span>-24</span><span>-36</span><span>-48</span><span>dB</span></div>
                <div class="solo"><button>S</button><button>S</button></div>
            </section>
        </div>

        <footer class="status">
            <span class="status-text">ると、他のオプションを使用できます。</span>
            <div class="alert"><svg width="36" height="34" viewBox="0 0 36 34"><path d="M18 1l18 33H0z" fill="#f0a010"/><path d="M17 8h3v12h-3zM17 23h3v4h-3z" fill="#5a1500"/></svg></div>
        </footer>
    </div>

    <svg class="ring" width="3840" height="2160" viewBox="0 0 3840 2160" aria-hidden="true">
        <defs>
            <clipPath id="inside"><path d="M0 889h2369V0h795v2160H0z"/></clipPath>
            <clipPath id="over-video"><path d="M0 0h2369v889H0z"/></clipPath>
            <clipPath id="outside"><path d="M3164 0h676v2160h-676z"/></clipPath>
        </defs>
        <ellipse cx="2889" cy="1140" rx="535" ry="1165" fill="none" stroke="#f20000" stroke-opacity=".66" stroke-width="36" clip-path="url(#inside)"/>
        <ellipse cx="2889" cy="1140" rx="535" ry="1165" fill="none" stroke="#ac4242" stroke-width="36" clip-path="url(#over-video)"/>
        <ellipse cx="2889" cy="1140" rx="535" ry="1165" fill="none" stroke="#870000" stroke-width="36" clip-path="url(#outside)"/>
    </svg>
</body>
</html>
```
FILE: styles.css
```css
* {
    box-sizing: border-box;
}
body {
    margin: 0;
    background: #000;
    color: #9c9c9c;
    font-family: "Noto Sans", "Noto Sans CJK JP", sans-serif;
    font-size: 24px;
    line-height: 32px;
    position: relative;
    overflow: hidden;
}
button {
    background: none;
    border: none;
    padding: 0;
    margin: 0;
    color: inherit;
    font: inherit;
    cursor: pointer;
    white-space: nowrap;
}
svg {
    display: block;
    flex: none;
}
.sprite {
    position: absolute;
    width: 0;
    height: 0;
}
.app {
    width: 82.4vw;
    height: 100vh;
    background: #080808;
    display: grid;
    grid-template-columns: 1fr 573px;
    grid-template-rows: 1fr 38px;
    column-gap: 9px;
    row-gap: 3px;
    overflow: hidden;
}
.workspace {
    display: flex;
    flex-direction: column;
    gap: 10px;
    min-width: 0;
    min-height: 0;
}
.panel {
    background: #181818;
    overflow: hidden;
}
.dim {
    color: #484848;
}

/* upper row */
.upper {
    display: grid;
    grid-template-columns: 219px 114px 1fr 141px;
    column-gap: 9px;
    height: 1114px;
}
.effects {
    display: flex;
    align-items: flex-end;
}
.effects-bar {
    display: flex;
    align-items: center;
    gap: 27px;
    padding: 0 0 6px 7px;
    color: #b0b0b0;
}
.effects-bar .dim {
    color: #484848;
}
.tools {
    color: #b0b0b0;
}
.tools button {
    position: relative;
    display: flex;
    align-items: center;
    justify-content: center;
    width: 100%;
    height: 64px;
}
.tools button:first-child {
    margin-top: -32px;
}
.tools .corner {
    position: absolute;
    right: 28px;
    bottom: 6px;
    width: 10px;
    height: 8px;
}
.monitor {
    overflow: visible;
    display: flex;
    flex-direction: column;
}
.video {
    height: 889px;
    margin-left: -16px;
    margin-right: 63px;
    background: #797979;
    position: relative;
}
.monitor-info {
    display: flex;
    align-items: center;
    height: 48px;
    padding: 0 70px 0 48px;
}
.timecode {
    color: #2288ee;
    font-size: 34px;
    font-weight: 500;
}
.select {
    display: grid;
    align-items: center;
    width: 227px;
    color: #c8c8c8;
}
.select select {
    grid-area: 1 / 1;
    appearance: none;
    width: 100%;
    height: 46px;
    padding: 0 14px;
    background: #111;
    border: 2px solid #262626;
    border-radius: 4px;
    color: inherit;
    font: inherit;
}
.select svg {
    grid-area: 1 / 1;
    justify-self: end;
    margin-right: 12px;
    width: 20px;
    height: 12px;
    color: #aaa;
    pointer-events: none;
}
.monitor-info .select {
    width: 205px;
}
.monitor-info select {
    height: 40px;
}
.zoom-select {
    margin-left: 60px;
}
.quality-select {
    margin-left: auto;
}
.wrench {
    color: #b0b0b0;
    margin: 0 27px 0 30px;
}
.duration {
    font-size: 34px;
    font-weight: 500;
}
.monitor-ruler {
    margin: 22px 32px 0 37px;
}
.hscroll {
    border: 2px solid #222;
    border-radius: 14px;
    background: #101010;
    height: 28px;
}
.thumb {
    display: flex;
    align-items: center;
    justify-content: space-between;
    height: 24px;
    border-radius: 12px;
    background: #262626;
}
.thumb i,
.vscroll i {
    width: 24px;
    height: 24px;
    border: 5px solid #888;
    border-radius: 50%;
    background: #181818;
}
.monitor-scroll {
    margin: 2px 32px 0 35px;
}
.monitor-scroll .thumb {
    margin-left: 30px;
    width: 190px;
}
.transport {
    display: flex;
    align-items: center;
    height: 48px;
    margin-top: 19px;
    padding: 0 61px 0 562px;
    color: #b0b0b0;
}
.transport button {
    width: 83px;
    display: flex;
    justify-content: center;
}
.transport .spaced {
    margin-left: 20px;
}
.transport .plus {
    width: 28px;
    margin-left: auto;
}

/* title designer tools */
.title-side {
    display: flex;
    flex-direction: column;
    gap: 9px;
    min-height: 0;
}
.title-tools {
    height: 524px;
}
.align {
    flex: 1;
    padding-top: 22px;
}
.pair {
    display: grid;
    grid-template-columns: 60px 60px;
    height: 50px;
    margin-left: 6px;
    align-items: center;
    color: #b0b0b0;
}
.pair.dim {
    color: #444;
}
.pair button {
    display: flex;
    justify-content: center;
    align-items: center;
    height: 50px;
}
.title-side hr {
    height: 4px;
    border: none;
    background: #262626;
    margin: 8px 15px 8px 7px;
}
.title-tools hr {
    margin-top: 7px;
    margin-bottom: 7px;
}
.align h3 {
    margin: 0 20px 4px 0;
    font-size: 24px;
    font-weight: normal;
    text-align: center;
}
.align hr + h3 {
    margin-top: 18px;
    margin-bottom: 4px;
}

/* lower row */
.lower {
    display: grid;
    grid-template-columns: 254px 1fr;
    column-gap: 9px;
    flex: 1;
    min-height: 0;
}
.project {
    display: flex;
    flex-direction: column;
}
.project-status {
    display: flex;
    justify-content: flex-end;
    width: 225px;
    margin-top: 152px;
    overflow: hidden;
    white-space: nowrap;
}
.bin {
    position: relative;
    width: 223px;
    height: 666px;
    flex: none;
    margin-top: 36px;
    background: #121212;
    border: 2px solid #262626;
    border-left: none;
    overflow: hidden;
}
.bin table {
    border-collapse: collapse;
    table-layout: fixed;
    width: 221px;
}
.bin th {
    height: 44px;
    padding: 0 0 0 11px;
    background: #1b1b1b;
    border-bottom: 2px solid #262626;
    color: #b0b0b0;
    font-weight: normal;
    text-align: left;
    white-space: nowrap;
    overflow: hidden;
}
.bin th:first-child {
    width: 120px;
    padding: 0;
    border-right: 2px solid #262626;
    direction: rtl;
    padding-right: 11px;
}
.bin td {
    height: 57px;
    padding: 0 0 6px;
    border-bottom: 2px solid #222;
    white-space: nowrap;
}
.bin td + td {
    padding-left: 17px;
    color: #2277cc;
    font-size: 20px;
}
.bin .selected td {
    background: #424242;
}
.bin .last td {
    padding-bottom: 16px;
}
.bin-scroll {
    position: absolute;
    right: 0;
    top: 46px;
    bottom: 0;
    width: 29px;
    background: #141414;
}
.bin-scroll::before {
    content: "";
    display: block;
    width: 24px;
    height: 60px;
    margin: 492px 0 0 3px;
    border-radius: 12px;
    background: #303030;
}
.project-bar {
    display: flex;
    align-items: center;
    gap: 42px;
    flex: 1;
    padding: 14px 0 0 20px;
    color: #b0b0b0;
}

/* timeline */
.timeline {
    display: flex;
    flex-direction: column;
    min-width: 0;
    background: #181818;
    border: 4px solid #2878cc;
}
.tabs {
    display: flex;
    height: 60px;
    padding-left: 61px;
}
.tab {
    height: 57px;
    margin-right: 140px;
}
.tab:first-child {
    margin-right: 102px;
}
.tab.active {
    display: flex;
    align-items: center;
    justify-content: space-between;
    width: 203px;
    margin-right: 88px;
    border-bottom: 6px solid #bbb;
    color: #c8c8c8;
}
.tab-name {
    font-size: 25px;
}
.tl-top {
    display: grid;
    grid-template-columns: 559px 1fr;
    height: 109px;
}
.tl-controls .timecode {
    display: block;
    height: 52px;
    margin: 7px 0 0 40px;
    font-size: 38px;
}
.tl-icons {
    display: flex;
    align-items: center;
    height: 44px;
    margin: 5px 0 0 26px;
    color: #b0b0b0;
}
.tl-icons button {
    width: 81px;
    display: flex;
    justify-content: center;
}
.tl-icons .on {
    color: #2288ee;
}
.tl-icons .dim {
    color: #484848;
}
.ruler {
    position: relative;
    margin-right: 54px;
    padding-top: 39px;
}
.ruler-labels {
    display: flex;
    height: 37px;
    padding-left: 81px;
    font-size: 26px;
}
.ruler-labels span {
    width: 335px;
}
.render-bar {
    width: 999px;
    height: 7px;
    margin-top: -1px;
    background: #fbf50a;
}
.ghost-line {
    position: absolute;
    left: 1363px;
    top: 5px;
    width: 3px;
    height: 98px;
    background: #858585;
}
.tl-body {
    display: flex;
    gap: 2px;
    height: 761px;
    padding-right: 27px;
}
.tracks {
    position: relative;
    flex: 1;
    min-width: 0;
}
.track {
    display: grid;
    grid-template-columns: 559px 1fr;
    height: 36px;
    border-bottom: 2px solid #262626;
}
.head {
    display: grid;
    grid-template-columns: 88px 42px 76px 74px 50px;
    align-items: center;
    justify-items: center;
    padding-left: 18px;
    border-right: 2px solid #262626;
    background: #1a1a1a;
}
.head button {
    height: 32px;
    line-height: 32px;
}
.head svg {
    color: #b0b0b0;
}
.lock {
    width: 22px;
    height: 26px;
}
.sync {
    width: 32px;
    height: 26px;
}
.eye {
    width: 32px;
    height: 22px;
}
.mic {
    width: 24px;
    height: 34px;
}
.head .mic,
.head .dim {
    color: #484848;
}
.lane {
    display: grid;
    grid-template-columns: 177px 400px 190px 115px 116px 1fr;
    grid-template-rows: 100%;
    background: #131313;
    min-width: 0;
}
.v10 {
    height: 30px;
    overflow: hidden;
}
.v10 .head {
    grid-template-rows: 28px;
    align-items: end;
}
.v10 .head svg {
    margin-bottom: 17px;
}
.v10 .head button {
    height: 22px;
    line-height: 22px;
}
.v9 {
    height: 60px;
}
.v1 {
    height: 35px;
    border-bottom: none;
}
.clip {
    grid-row: 1;
    display: flex;
    align-items: center;
    margin-right: 2px;
    padding-left: 24px;
    overflow: hidden;
    white-space: nowrap;
    color: #0c0c0c;
    line-height: 34px;
}
.c1 {
    grid-column: 1;
    margin-left: 1px;
    padding-left: 14px;
}
.c2 {
    grid-column: 2;
}
.long {
    grid-column: 2 / 4;
}
.c3 {
    grid-column: 3;
}
.c4 {
    grid-column: 4;
}
.c5 {
    grid-column: 5;
}
.late {
    margin-left: 38px;
}
.tail {
    padding-left: 4px;
}
.green {
    background: #49b551;
}
.pink {
    background: #e580e5;
}
.blue {
    background: #6a94cb;
}
.off {
    background: #562b56;
    border-left: 2px solid #8a6a8a;
    padding-left: 22px;
}
.off.c1 {
    border-left: none;
    padding-left: 14px;
}
.nest {
    background: linear-gradient(135deg, #ddd 9px, #49b551 9px);
}
.fx {
    flex: none;
    width: 29px;
    height: 28px;
    margin-right: 16px;
    border: 3px solid #aaa;
    background: #5c5c5c;
    color: #151515;
    font-size: 20px;
    font-style: italic;
    font-weight: normal;
    line-height: 19px;
    text-align: center;
}
.fx.yellow {
    background: #fcc310;
}
.fx.leaf {
    background: #0c920c;
}
.fx.violet {
    background: #a880e8;
}
.av-split {
    height: 9px;
    background: #262626;
}
.a1 {
    height: 197px;
}
.a1 .head,
.a2 .head,
.a3 .head {
    grid-template-columns: 88px 42px 76px 260px;
}
.a1 .head {
    grid-template-rows: 154px;
}
.a-row {
    display: grid;
    grid-template-columns: 74px 52px 76px 58px;
    align-items: center;
    justify-items: center;
    color: #c0c0c0;
}
.a1-controls {
    align-self: start;
    padding-top: 12px;
}
.a1-controls .a-row {
    height: 36px;
}
.a-name {
    height: 52px;
    margin-top: 22px;
    padding-left: 9px;
}
.a1-controls .keys {
    margin-top: 9px;
}
.wave {
    grid-area: 1 / 1 / 2 / 7;
}
.part {
    position: relative;
    display: flow-root;
    grid-row: 1;
    padding-left: 5px;
}
.part .fx {
    position: absolute;
    left: 24px;
    top: 7px;
    margin: 0;
}
.part span {
    display: block;
    width: 26px;
    height: 32px;
    margin-top: 55px;
    background: rgba(15, 25, 42, .7);
    color: #c8c8c8;
    font-size: 22px;
    text-align: center;
}
.part span + span {
    margin-top: 68px;
}
.a2 {
    height: 60px;
}
.mix .head {
    grid-template-columns: 88px 42px 130px 166px 113px;
}
.mix-name {
    justify-self: start;
    padding-left: 11px;
}
.hot {
    color: #2288ee;
    font-size: 26px;
    text-align: left;
}
.mix .bowtie {
    justify-self: end;
    margin-right: 16px;
}
.rest {
    height: 47px;
}
.rest .head,
.rest .lane {
    background: #151515;
}
.playhead {
    position: absolute;
    left: 1512px;
    top: -34px;
    bottom: 0;
    width: 28px;
    background: linear-gradient(#2878cc, #2878cc) center / 3px 100% no-repeat;
}
.vscrolls {
    display: flex;
    flex-direction: column;
    gap: 15px;
    width: 25px;
    padding: 8px 0 12px;
}
.vscroll {
    display: flex;
    flex-direction: column;
    justify-content: space-between;
    align-items: center;
    border-radius: 12px;
    background: #262626;
}
.video-scroll {
    height: 365px;
}
.audio-scroll {
    flex: 1;
}
.tl-scroll {
    margin: 3px 54px 0 28px;
}
.tl-scroll .thumb {
    width: 251px;
    margin-left: 32px;
}

/* inspector */
.inspector {
    display: flex;
    flex-direction: column;
    gap: 9px;
    min-height: 0;
}
.props {
    height: 1507px;
    flex: none;
}
.row {
    display: grid;
    grid-template-columns: 331px auto auto 1fr;
    align-items: center;
    height: 50px;
}
.row:first-child {
    margin-top: -5px;
}
.name {
    display: flex;
    align-items: center;
    padding-left: 42px;
    white-space: nowrap;
}
.sub {
    grid-template-columns: 86px 245px auto 1fr;
}
.sub .name,
.section .name {
    padding-left: 0;
}
.section {
    grid-template-columns: 47px 1fr;
}
.section .name {
    color: #c0c0c0;
}
.down {
    width: 20px;
    height: 12px;
    margin-left: 6px;
    color: #aaa;
}
.sub .down {
    margin-left: 43px;
}
.right {
    width: 12px;
    height: 20px;
    margin-left: 43px;
    color: #aaa;
}
.row input {
    appearance: none;
    width: 34px;
    height: 34px;
    margin: 0 13px 0 0;
    border: 4px solid #8c8c8c;
    border-radius: 6px;
}
.row input:checked {
    background: #8c8c8c;
    display: grid;
    place-items: center;
}
.row input:checked::before {
    content: "";
    width: 8px;
    height: 16px;
    border: solid #181818;
    border-width: 0 4px 4px 0;
    transform: rotate(45deg);
}
.muted .name,
.hot:disabled {
    color: #444;
}
.swatch {
    width: 46px;
    height: 24px;
    margin: 0 0 5px 6px;
    background: #000;
    border: 2px solid #262626;
}
.fill-blue {
    background: #0070e8;
    border: none;
}
.pipette {
    width: 36px;
    height: 36px;
    margin-left: 11px;
    color: #b0b0b0;
}
.add {
    width: 56px;
    margin-bottom: 8px;
    padding-bottom: 4px;
    border-bottom: 3px solid #2288ee;
    color: #2288ee;
    text-decoration: none;
}
.meters {
    display: grid;
    grid-template-columns: 458px 17px 1fr;
    grid-template-rows: 458px 1fr;
    flex: 1;
    padding: 63px 0 0 32px;
}
.meter-box {
    display: grid;
    grid-template-columns: 1fr 1fr;
    border: 2px solid #000;
    background: #111;
}
.channel {
    display: flex;
    flex-direction: column;
    justify-content: space-between;
}
.channel + .channel .peak {
    border-left: 2px solid #000;
}
.peak {
    height: 22px;
    border-bottom: 2px solid #000;
}
.level {
    height: 3px;
    margin-right: 1px;
    background: #fbe90a;
}
.meter-labels {
    display: flex;
    flex-direction: column;
    justify-content: space-between;
    height: 460px;
    padding-top: 4px;
    font-size: 22px;
}
.solo {
    display: grid;
    grid-template-columns: 1fr 1fr;
    justify-items: center;
    padding: 11px 3px 0 0;
}
.solo button {
    width: 42px;
    height: 40px;
    border: 2px solid #262626;
    border-radius: 4px;
    background: #141414;
    color: #c8c8c8;
}

/* status bar */
.status {
    grid-column: 1 / 3;
    display: flex;
    justify-content: space-between;
    background: #1b1b1b;
    overflow: hidden;
}
.status-text {
    padding: 9px 0 0 2px;
    white-space: nowrap;
}
.alert {
    width: 62px;
    border-left: 4px solid #262626;
    padding: 12px 0 0 13px;
}
.ring {
    position: absolute;
    left: 0;
    top: 0;
    width: 100vw;
    height: 100vh;
    pointer-events: none;
}
```
